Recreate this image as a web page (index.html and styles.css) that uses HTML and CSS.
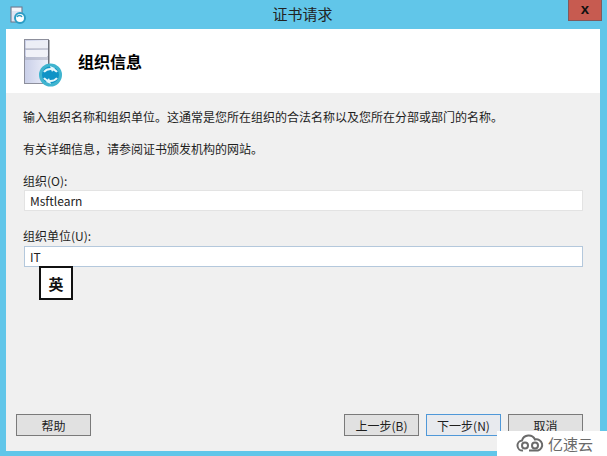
FILE: index.html
```html
<!DOCTYPE html>
<html lang="zh-CN">
<head>
  <meta charset="UTF-8">
  <meta name="viewport" content="width=device-width, initial-scale=1.0">
  <title>证书请求</title>
  <link rel="stylesheet" href="styles.css">
</head>
<body>
  <div class="window">
    <div class="titlebar">
      <svg class="app-icon" width="16" height="18" viewBox="0 0 16 18">
        <rect x="1" y="1" width="11" height="15" fill="#dfe4f2" stroke="#6f7488"/>
        <rect x="2" y="2" width="9" height="3" fill="#f4f5fa"/>
        <circle cx="10" cy="12" r="5" fill="#fff" stroke="#2b9cc4" stroke-width="2"/>
        <path d="M7 11c1-2 4-2 5 0" fill="none" stroke="#2b9cc4" stroke-width="1.5"/>
      </svg>
      <div class="title">证书请求</div>
      <div class="close"><span>x</span></div>
    </div>
    <div class="client">
      <div class="header">
        <svg class="hero-icon" width="42" height="50" viewBox="0 0 42 50">
          <defs>
            <linearGradient id="tower" x1="0" y1="0" x2="1" y2="0">
              <stop offset="0" stop-color="#c9cfe8"/>
              <stop offset="1" stop-color="#eef0fa"/>
            </linearGradient>
          </defs>
          <rect x="0.5" y="0.5" width="24" height="44" fill="url(#tower)" stroke="#8d8f9c"/>
          <rect x="24" y="1" width="1.5" height="44" fill="#6c6e78"/>
          <rect x="2" y="2" width="21" height="8" fill="#eceef6"/>
          <path d="M1 10h23M1 18h23M1 20h23" stroke="#a4a7b8"/>
          <rect x="2" y="11" width="21" height="7" fill="#f1f2f8"/>
          <circle cx="26.500" cy="36" r="10" fill="#0f93c6" stroke="#3fb4cf" stroke-width="3"/>
          <path d="M20 33c3-4 10-4 13 0M33 39c-3 4-10 4-13 0" fill="none" stroke="#e6f7fb" stroke-width="2"/>
          <path d="M26 27l5 2-3 4zM27 45l-5-2 3-4z" fill="#e6f7fb"/>
        </svg>
        <h1>组织信息</h1>
      </div>
      <div class="content">
        <p class="intro">输入组织名称和组织单位。这通常是您所在组织的合法名称以及您所在分部或部门的名称。</p>
        <p class="more">有关详细信息，请参阅证书颁发机构的网站。</p>
        <div class="field first">
          <label for="org">组织(O):</label>
          <input id="org" type="text" value="Msftlearn">
        </div>
        <div class="field second">
          <label for="unit">组织单位(U):</label>
          <input id="unit" class="focused" type="text" value="IT">
          <div class="ime">英</div>
        </div>
        <div class="buttons">
          <button type="button" class="btn">帮助</button>
          <div class="nav">
            <button type="button" class="btn">上一步(B)</button>
            <button type="button" class="btn default">下一步(N)</button>
            <button type="button" class="btn">取消</button>
          </div>
        </div>
      </div>
    </div>
  </div>
  <div class="watermark">
    <svg width="31" height="19" viewBox="0 0 31 19">
      <path d="M8 16.500a5 5 0 0 1-1-10 7 7 0 0 1 13-1 5.500 5.500 0 0 1 3 11h-9" fill="none" stroke="#6a6a6a" stroke-width="2"/>
      <circle cx="10" cy="11.500" r="3" fill="none" stroke="#6a6a6a" stroke-width="2"/>
      <circle cx="20" cy="11.500" r="3" fill="none" stroke="#6a6a6a" stroke-width="2"/>
    </svg>
    <span>亿速云</span>
  </div>
</body>
</html>
```

FILE: styles.css
```css
html, body {
  margin: 0;
  padding: 0;
  height: 100%;
  overflow: hidden;
}
body {
  font-family: "Noto Sans CJK SC", "Liberation Sans", sans-serif;
  font-size: 12px;
  color: #1e1e1e;
  background: #61c6e9;
}
.window {
  display: flex;
  flex-direction: column;
  width: 607px;
  height: 456px;
}
.titlebar {
  display: flex;
  height: 29px;
  flex: none;
  position: relative;
  box-sizing: border-box;
  padding-left: 10px;
}
.app-icon {
  margin-top: 6px;
}
.title {
  position: absolute;
  left: 0;
  right: 2px;
  top: 4px;
  text-align: center;
  font-size: 15px;
  line-height: 20px;
  color: #222;
}
.close {
  position: absolute;
  top: 0;
  right: 5px;
  width: 34px;
  height: 21px;
  box-sizing: border-box;
  background: #c75b50;
  border: 1px solid #7f5a5e;
  border-top: none;
  display: flex;
  justify-content: center;
  font-family: "Liberation Sans", sans-serif;
  font-size: 15px;
  font-weight: bold;
  line-height: 17px;
  color: #111;
}
.client {
  flex: 1;
  margin: 0 7px 5px 6px;
  background: #f0f0f0;
  display: flex;
  flex-direction: column;
  min-height: 0;
}
.header {
  height: 64px;
  flex: none;
  background: #fff;
  display: flex;
  align-items: center;
  padding-left: 18px;
}
.hero-icon {
  margin-top: 5px;
}
.header h1 {
  margin: 0 0 0 12px;
  font-size: 16px;
  font-weight: bold;
  color: #000;
}
.content {
  flex: 1;
  display: flex;
  flex-direction: column;
  padding: 0 17px 0 18px;
}
.intro, .more {
  margin: 0;
  line-height: 18px;
  margin-left: -1px;
}
.intro {
  margin-top: 15px;
}
.more {
  margin-top: 14px;
}
.field {
  display: flex;
  flex-direction: column;
  position: relative;
}
.field label {
  line-height: 18px;
  margin-left: -1px;
}
.field.first {
  margin-top: 14px;
}
.field.second {
  margin-top: 16px;
}
.field.second label {
  margin-bottom: 1px;
}
.field input {
  height: 21px;
  box-sizing: border-box;
  width: 100%;
  border: 1px solid #e3e3e3;
  background: #fff;
  font-family: "Noto Sans CJK SC", "Liberation Sans", sans-serif;
  font-size: 12px;
  padding: 0 5px;
  margin: 0;
  outline: none;
  color: #222;
}
.field input.focused {
  border-color: #b4c8dc;
}
.ime {
  position: absolute;
  left: 15px;
  top: 39px;
  width: 34px;
  height: 34px;
  box-sizing: border-box;
  border: 2px solid #111;
  background: #fff;
  display: flex;
  align-items: center;
  justify-content: center;
  font-size: 15px;
  font-weight: bold;
  color: #111;
}
.buttons {
  margin-top: auto;
  margin-bottom: 15px;
  margin-left: -8px;
  display: flex;
  justify-content: space-between;
}
.nav {
  display: flex;
  gap: 7px;
}
.btn {
  width: 75px;
  height: 22px;
  box-sizing: border-box;
  background: #e1e1e1;
  border: 1px solid #7a7a7a;
  border-radius: 0;
  font-family: "Noto Sans CJK SC", "Liberation Sans", sans-serif;
  font-size: 12px;
  color: #1e1e1e;
  padding: 0;
}
.btn.default {
  background: #e8eaee;
  border-color: #4f98d8;
}
.watermark {
  position: absolute;
  right: 0;
  bottom: 0;
  width: 110px;
  height: 25px;
  background: #fff;
  display: flex;
  align-items: center;
  gap: 2px;
  padding-left: 18px;
  box-sizing: border-box;
  font-size: 15px;
  color: #6a6a6a;
}
```
